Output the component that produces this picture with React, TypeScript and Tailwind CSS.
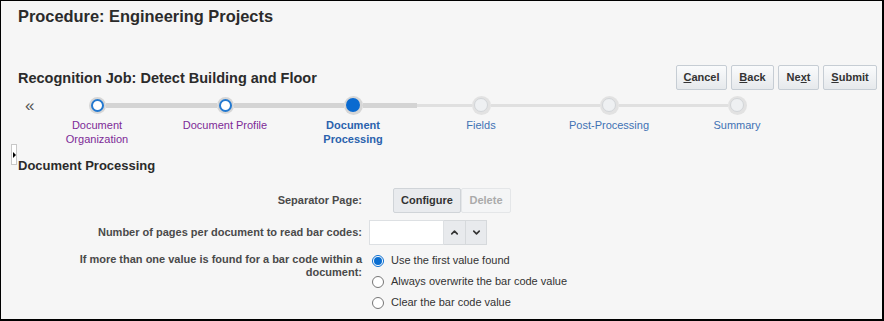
import { ChevronUp, ChevronDown } from "lucide-react";

type Step = { label: string[]; state: "done" | "current" | "todo" };

const steps: Step[] = [
  { label: ["Document", "Organization"], state: "done" },
  { label: ["Document Profile"], state: "done" },
  { label: ["Document", "Processing"], state: "current" },
  { label: ["Fields"], state: "todo" },
  { label: ["Post-Processing"], state: "todo" },
  { label: ["Summary"], state: "todo" },
];

function Half({ kind }: { kind: "none" | "thick" | "thin" }) {
  if (kind === "none") return <div className="flex-1" />;
  if (kind === "thick") return <div className="flex-1 h-[5px] bg-[#d4d4d4]" />;
  return <div className="flex-1 h-[3px] bg-[#e0e0e0]" />;
}

function Dot({ state }: { state: Step["state"] }) {
  if (state === "done")
    return (
      <div className="w-[17px] h-[17px] rounded-full bg-[#d6d6d6] flex items-center justify-center shrink-0">
        <div className="w-[13px] h-[13px] rounded-full bg-white border-2 border-[#2379d0]" />
      </div>
    );
  if (state === "current")
    return (
      <div className="w-[19px] h-[19px] rounded-full bg-[#d6d6d6] flex items-center justify-center shrink-0">
        <div className="w-[14px] h-[14px] rounded-full bg-[#0a6ad0]" />
      </div>
    );
  return (
    <div className="w-[19px] h-[19px] rounded-full bg-[#e2e2e2] flex items-center justify-center shrink-0">
      <div className="w-[14px] h-[14px] rounded-full bg-[#eef0f2] border border-[#d2d5d8]" />
    </div>
  );
}

function TopButton({ width, children }: { width: string; children: React.ReactNode }) {
  return (
    <button
      className={`${width} h-[25px] rounded-[2px] border border-[#c6cdd4] bg-gradient-to-b from-[#fafbfc] to-[#e6e9ec] text-[11px] font-bold text-[#333]`}
    >
      {children}
    </button>
  );
}

function Radio({ checked, label }: { checked?: boolean; label: string }) {
  return (
    <div className="h-[21px] flex items-center">
      {checked ? (
        <div className="ml-[2px] w-[12px] h-[12px] rounded-full border border-[#0a6ed1] bg-white flex items-center justify-center">
          <div className="w-[8px] h-[8px] rounded-full bg-[#0a6ed1]" />
        </div>
      ) : (
        <div className="ml-[2px] w-[12px] h-[12px] rounded-full border border-[#767676] bg-white" />
      )}
      <span className="ml-[7px] text-[11px] text-[#333]">{label}</span>
    </div>
  );
}

export default function App() {
  return (
    <div className="relative w-[884px] h-[321px] overflow-hidden border-t border-l border-r-2 border-b-2 border-black bg-[#f6f6f6] font-['Liberation_Sans',Arial,sans-serif] pl-[17px] pr-[5px] pt-[5px]">
      <h1 className="text-[16.4px] leading-5 font-bold text-[#2b2b2b]">Procedure: Engineering Projects</h1>

      {/* job header + actions */}
      <div className="mt-[39px] flex items-center justify-between">
        <h2 className="text-[14.5px] leading-[18px] font-bold text-[#2b2b2b]">
          Recognition Job: Detect Building and Floor
        </h2>
        <div className="flex gap-[4px]">
          <TopButton width="w-[51px]">
            <span className="underline">C</span>ancel
          </TopButton>
          <TopButton width="w-[43px]">
            <span className="underline">B</span>ack
          </TopButton>
          <TopButton width="w-[41px]">
            Ne<span className="underline">x</span>t
          </TopButton>
          <TopButton width="w-[54px]">
            <span className="underline">S</span>ubmit
          </TopButton>
        </div>
      </div>

      {/* train stops */}
      <div className="mt-[5px] flex items-start">
        <div className="ml-[7px] w-[8px] h-[20px] flex items-center text-[17px] leading-none text-[#555]">«</div>
        {steps.map((s, i) => {
          const left = i === 0 ? "none" : i <= 2 ? "thick" : "thin";
          const right = i === steps.length - 1 ? "none" : i <= 2 ? "thick" : "thin";
          const color =
            s.state === "done" ? "text-[#7d2a96]" : s.state === "current" ? "text-[#2a62ad] font-bold" : "text-[#3f72b4]";
          return (
            <div key={i} className="w-[128px] flex flex-col items-center">
              <div className="w-full h-[20px] flex items-center">
                <Half kind={left} />
                <Dot state={s.state} />
                <Half kind={right} />
              </div>
              <div className={`mt-[3px] text-[11px] leading-[14px] text-center ${color}`}>
                {s.label.map((l, j) => (
                  <div key={j}>{l}</div>
                ))}
              </div>
            </div>
          );
        })}
      </div>

      {/* splitter handle */}
      <div className="absolute left-[10px] top-[143px] w-[6px] h-[21px] bg-white border border-[#c8c8c8] flex items-center justify-center">
        <div className="w-0 h-0 border-y-[3px] border-y-transparent border-l-[3px] border-l-black" />
      </div>

      <h3 className="mt-[12px] text-[13px] leading-4 font-bold text-[#2b2b2b]">Document Processing</h3>

      {/* form */}
      <div className="mt-[14px] flex flex-col">
        <div className="flex items-center h-[25px]">
          <div className="w-[344px] text-right text-[11px] font-bold text-[#4a4a4a]">Separator Page:</div>
          <div className="ml-[31px] flex">
            <button className="w-[68px] h-[25px] rounded-[2px] border border-[#d0d4d8] bg-[#e9ebee] text-[11px] font-bold text-[#333]">
              Configure
            </button>
            <button className="w-[50px] h-[25px] rounded-[2px] border border-[#e4e6e8] bg-[#f4f5f6] text-[11px] font-bold text-[#aaa]">
              Delete
            </button>
          </div>
        </div>

        <div className="mt-[7px] flex items-center h-[25px]">
          <div className="w-[344px] text-right text-[11px] font-bold text-[#4a4a4a]">
            Number of pages per document to read bar codes:
          </div>
          <div className="ml-[7px] flex">
            <div className="w-[75px] h-[25px] bg-white border border-[#dde0e3]" />
            <div className="w-[22px] h-[25px] bg-[#e8eaed] border-y border-r border-[#d6d9dc] flex items-center justify-center">
              <ChevronUp size={11} strokeWidth={3.5} className="text-[#333]" />
            </div>
            <div className="w-[21px] h-[25px] bg-[#e8eaed] border-y border-r border-[#d6d9dc] flex items-center justify-center">
              <ChevronDown size={11} strokeWidth={3.5} className="text-[#333]" />
            </div>
          </div>
        </div>

        <div className="mt-[5px] flex items-start">
          <div className="w-[344px] pt-[3px] text-right text-[11px] leading-[13px] font-bold text-[#4a4a4a]">
            If more than one value is found for a bar code within a<br />
            document:
          </div>
          <div className="ml-[8px] flex flex-col">
            <Radio checked label="Use the first value found" />
            <Radio label="Always overwrite the bar code value" />
            <Radio label="Clear the bar code value" />
          </div>
        </div>
      </div>
    </div>
  );
}
